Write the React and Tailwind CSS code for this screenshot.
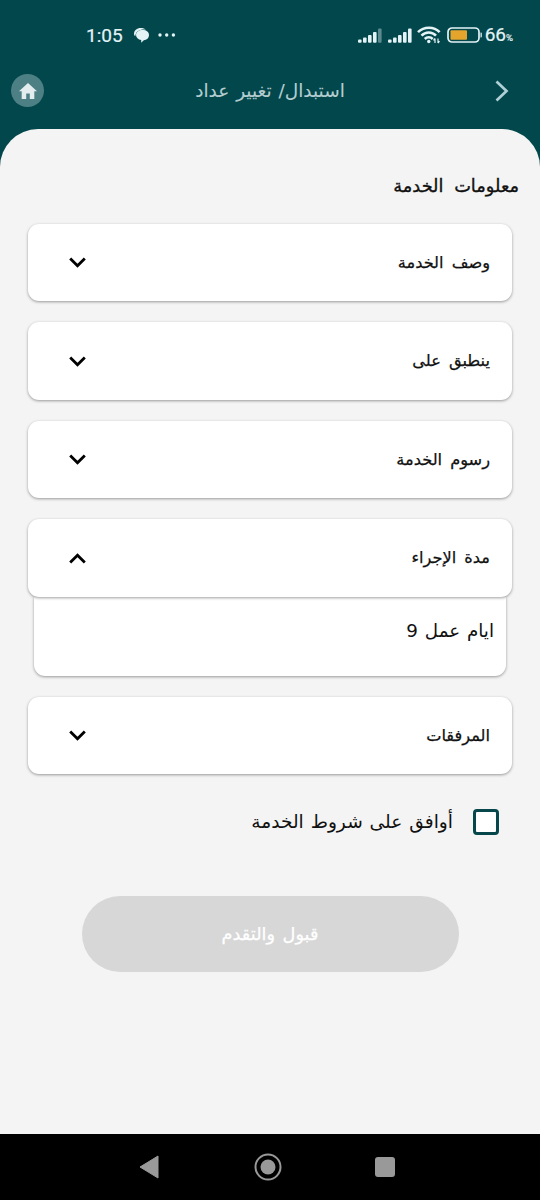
import { useState } from "react";
import clsx from "clsx";

const SECTIONS = [
  { id: "description", title: "وصف الخدمة" },
  { id: "applies", title: "ينطبق على" },
  { id: "fees", title: "رسوم الخدمة" },
  { id: "duration", title: "مدة الإجراء", content: "ايام عمل 9" },
  { id: "attachments", title: "المرفقات" },
];

const Signal = ({ weak }) => (
  <svg className="h-[15px] w-6" viewBox="0 0 24 15" fill="#e3f3f6">
    <rect x="0" y="11.5" width="3.6" height="3.2" rx="1" />
    <rect x="5" y="9.5" width="3.6" height="5.2" rx="1" />
    <rect x="10" y="7" width="3.6" height="7.7" rx="1" />
    <rect x="15" y="4" width="3.6" height="10.7" rx="1" />
    <rect x="20" y="0.5" width="3.6" height="14.2" rx="1" opacity={weak ? 0.4 : 1} />
  </svg>
);

const StatusBar = () => (
  <div
    dir="ltr"
    className="flex h-[70px] items-center pl-[86px] pr-[27px] font-['Roboto',sans-serif] text-[#e3f3f6]"
  >
    <span className="mt-[2px] w-[48px] text-[19px] leading-6 [-webkit-text-stroke:0.2px]">1:05</span>
    <svg className="h-[15px] w-[16px]" viewBox="0 0 16 15" fill="#e3f3f6">
      <path d="M0 6C0 2.400 2.800 0 6.800 0c2.200 0 4 .6 5 1.500C5.500 1 1.800 3 1.300 8.300 0.500 7.700 0 7 0 6Z" />
      <path d="M8.600 2c3.900 0 6.400 2 6.400 5s-2.300 5-5.200 5.200L7.200 14.700V12C4.200 11.600 2 9.700 2 7c0-3 2.700-5 6.600-5Z" />
    </svg>
    <svg className="ml-2 h-1 w-[18px]" viewBox="0 0 18 4" fill="#e3f3f6">
      <circle cx="2" cy="2" r="1.700" />
      <circle cx="8.700" cy="2" r="1.700" />
      <circle cx="15.400" cy="2" r="1.700" />
    </svg>
    <div className="ml-auto flex items-center">
      <Signal weak />
      <span className="w-[6px]" />
      <Signal />
      <svg
        className="ml-[5px] h-[18px] w-6"
        viewBox="0 0 24 18"
        fill="none"
        stroke="#e3f3f6"
        strokeWidth="2.600"
      >
        <path d="M1 6.200C7 0.200 17 0.200 22.600 6.200" />
        <path d="M4.500 9.700C8.500 5.500 15 5.500 19 9.700" />
        <path d="M7.800 13C10 10.700 13.500 10.700 15.700 13" />
        <circle cx="11.800" cy="15.500" r="1.700" fill="#e3f3f6" stroke="none" />
        <path d="M18 17v-4.500M16.500 14.300l1.500-1.800M21 12.500V17m0 0 1.500-1.800" strokeWidth="1.200" />
      </svg>
      <svg className="ml-[6px] h-4 w-[35px]" viewBox="0 0 35 16">
        <rect x="1" y="1" width="31" height="14" rx="4" fill="none" stroke="#e3f3f6" strokeWidth="1.700" />
        <rect x="3.500" y="3.300" width="16.500" height="9.500" rx="1" fill="#e5a52d" />
        <path d="M33.500 5.500c1 0 1.300.5 1.300 1v3c0 .5-.3 1-1.300 1Z" fill="#e3f3f6" />
      </svg>
      <span className="mt-[2px] ml-[3px] flex items-baseline text-[19px] leading-6 [-webkit-text-stroke:0.2px]">
        66<span className="text-[9.500px]">%</span>
      </span>
    </div>
  </div>
);

const Header = () => (
  <header dir="ltr" className="flex h-[59px] items-start justify-between pl-[11px] pr-[31px]">
    <button className="mt-1 flex size-[33px] items-center justify-center rounded-full bg-[#4d8084]">
      <svg className="h-[16px] w-[18px]" viewBox="0 0 18 16" fill="#e3edef">
        <path d="M9 0 0 8.300h2.700V16h4.500v-5.500h3.600V16h4.500V8.300H18Z" />
      </svg>
    </button>
    <h1
      dir="rtl"
      className="mt-[7px] ml-[1px] text-[18.500px] leading-7 text-[#b4cdd0] [word-spacing:1px] [-webkit-text-stroke:0.1px]"
    >
      استبدال/ تغيير عداد
    </h1>
    <svg className="mt-[10px] h-[22px] w-[14px]" viewBox="0 0 14 22" fill="none" stroke="#b0d0d8" strokeWidth="2.700">
      <path d="M1.500 1.500 11.500 11 1.500 20.500" />
    </svg>
  </header>
);

const Section = ({ section, open, onToggle }) => (
  <section>
    <button
      onClick={onToggle}
      className="relative flex h-[77.300px] w-full items-center justify-between rounded-[11px] bg-white pr-[22px] pl-[41px] shadow-[0_1px_3px_rgba(0,0,0,0.38)]"
    >
      <span className="text-[16.200px] leading-7 [word-spacing:3px] [-webkit-text-stroke:0.25px]">
        {section.title}
      </span>
      <svg
        className={clsx("h-[11px] w-[17px]", open && "rotate-180")}
        viewBox="0 0 17 11"
        fill="none"
        stroke="#000"
        strokeWidth="2.800"
      >
        <path d="M1.200 1.400 8.500 8.700 15.800 1.400" />
      </svg>
    </button>
    {open && (
      <div className="mx-[6px] h-[79px] rounded-b-[11px] bg-white pt-5 pr-3 shadow-[0_1px_3px_rgba(0,0,0,0.38)]">
        <p className="text-[18.300px] leading-7 [word-spacing:1px]">{section.content}</p>
      </div>
    )}
  </section>
);

const NavigationBar = () => (
  <nav dir="ltr" className="flex h-[66px] items-center bg-black pl-[139px]">
    <svg className="h-6 w-5" viewBox="0 0 20 24" fill="#999">
      <path d="M1 12 19 1v22Z" stroke="#999" strokeLinejoin="round" />
    </svg>
    <svg className="ml-[95px] size-7" viewBox="0 0 28 28">
      <circle cx="14" cy="14" r="12.500" fill="none" stroke="#999" strokeWidth="2" />
      <circle cx="14" cy="14" r="7.500" fill="#999" />
    </svg>
    <span className="ml-[93px] size-5 rounded-[3px] bg-[#999]" />
  </nav>
);

const App = () => {
  const [openId, setOpenId] = useState("duration");
  const [accepted, setAccepted] = useState(false);

  return (
    <div
      dir="rtl"
      className="flex h-[1200px] w-[540px] flex-col bg-[#02474c] font-['DejaVu_Sans',sans-serif] text-[#111]"
    >
      <StatusBar />
      <Header />
      <main className="flex-1 rounded-t-[38px] bg-[#f4f4f4] px-7 pt-[43px]">
        <h2 className="-mr-[7px] text-[17.800px] leading-7 [word-spacing:5px] [-webkit-text-stroke:0.35px]">
          معلومات الخدمة
        </h2>
        <div className="mt-6 flex flex-col gap-[21.200px]">
          {SECTIONS.map((section) => (
            <Section
              key={section.id}
              section={section}
              open={openId === section.id}
              onToggle={() => setOpenId(openId === section.id ? null : section.id)}
            />
          ))}
        </div>
        <label className="mt-[34px] mr-[13px] flex items-center gap-5">
          <input
            type="checkbox"
            checked={accepted}
            onChange={() => setAccepted(!accepted)}
            className="size-[26px] appearance-none rounded-[4px] border-[3px] border-[#07474c] bg-white checked:bg-[#07474c]"
          />
          <span className="text-[18.600px] leading-7 [word-spacing:1px]">أوافق على شروط الخدمة</span>
        </label>
        <button className="mx-auto mt-[60px] flex h-[76px] w-[377px] items-center justify-center rounded-full bg-[#d7d7d7] text-[17.700px] text-white [word-spacing:2px] [-webkit-text-stroke:0.25px]">
          قبول والتقدم
        </button>
      </main>
      <NavigationBar />
    </div>
  );
};

export default App;
